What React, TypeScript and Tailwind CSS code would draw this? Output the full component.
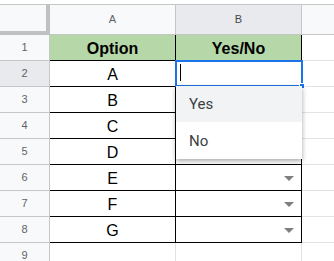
import React from "react";

const rows = ["Option", "A", "B", "C", "D", "E", "F", "G", ""];

function Arrow() {
  return (
    <svg width="10" height="5" viewBox="0 0 10 5" className="block">
      <polygon points="0,0 10,0 5,5" fill="#7f7f7f" />
    </svg>
  );
}

export default function App() {
  return (
    <div
      className="w-[334px] h-[261px] overflow-hidden bg-white"
      style={{ fontFamily: '"Liberation Sans", Arial, sans-serif' }}
    >
      <div className="grid grid-cols-[50px_126px_126px_1fr] grid-rows-[5px_30px_repeat(9,26px)]">
        {/* top strip */}
        <div className="col-span-4 bg-white border-b border-[#c4c7c5]" />
        {/* corner */}
        <div className="bg-[#f8f9fa] border-r-4 border-b-4 border-[#c0c0c0]" />
        <div className="bg-[#f8f9fa] border-r border-b border-[#c4c7c5] flex items-center justify-center text-[11px] text-[#5f6368]">
          A
        </div>
        <div className="bg-[#e8eaed] border-r border-b border-[#c4c7c5] flex items-center justify-center text-[11px] text-[#444746]">
          B
        </div>
        <div className="bg-[#f8f9fa] border-b border-[#c4c7c5]" />

        {rows.map((val, i) => {
          const r = i + 1;
          const isHeader = r === 1;
          const isData = r <= 8;
          const selected = r === 2;
          return (
            <React.Fragment key={r}>
              <div
                className={`${selected ? "bg-[#e8eaed]" : "bg-[#f8f9fa]"} border-r border-b border-[#c4c7c5] flex items-center justify-center text-[11px] text-[#5f6368]`}
              >
                {r}
              </div>
              <div
                className={`${isHeader ? "bg-[#b6d7a8] font-bold" : "bg-white"} ${isData ? "border-r border-b border-black" : "border-r border-[#e2e3e3]"} flex items-end justify-center pb-[2px] text-[16px] leading-[18px] text-black`}
              >
                {val}
              </div>
              <div
                className={`relative ${isHeader ? "bg-[#b6d7a8] font-bold" : "bg-white"} ${isData ? "border-r border-b border-black" : "border-r border-[#e2e3e3]"} flex items-end justify-center pb-[2px] text-[16px] leading-[18px] text-black`}
              >
                {isHeader ? "Yes/No" : null}
                {isData && !isHeader && !selected ? (
                  <div className="absolute right-[7px] top-[11px]">
                    <Arrow />
                  </div>
                ) : null}
                {selected ? (
                  <>
                    <div className="absolute left-[-1px] top-[-1px] w-[128px] h-[27px] border-2 border-[#1a73e8] bg-white z-10">
                      <div className="absolute left-[3px] top-[2px] w-px h-[17px] bg-black" />
                    </div>
                    <div className="absolute right-[-4px] bottom-[-3px] w-[6px] h-[6px] bg-[#1a73e8] border border-white z-20" />
                    <div
                      className="absolute left-0 top-[25px] w-[126px] bg-white z-30 shadow-[0_2px_5px_rgba(0,0,0,0.35)] py-0"
                      style={{ fontFamily: 'Roboto, "Liberation Sans", Arial, sans-serif' }}
                    >
                      <div className="h-[36px] bg-[#f1f3f4] flex items-center pl-[13px] text-[15px] text-[#3c4043] font-normal">
                        Yes
                      </div>
                      <div className="h-[37px] bg-white flex items-center pl-[13px] text-[15px] text-[#3c4043] font-normal">
                        No
                      </div>
                    </div>
                  </>
                ) : null}
              </div>
              <div className="bg-white border-b border-[#e2e3e3]" />
            </React.Fragment>
          );
        })}
      </div>
    </div>
  );
}
